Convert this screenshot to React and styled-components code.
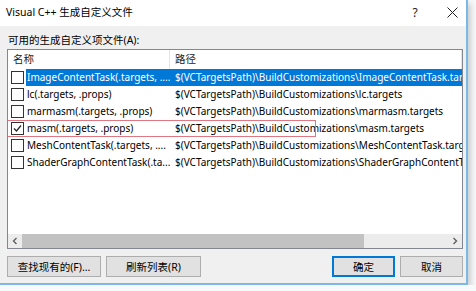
import React from 'react';
import styled, { createGlobalStyle } from 'styled-components';

const GlobalStyle = createGlobalStyle`
  html, body {
    margin: 0;
    padding: 0;
    background: #f7f9fb;
    overflow: hidden;
  }
  body {
    font-family: "Noto Sans", "Noto Sans CJK SC", sans-serif;
    font-size: 10px;
    color: #000;
  }
`;

const Frame = styled.div`
  width: 466px;
  height: 283px;
  background: #fff;
  border-right: 2px solid #7cb8e6;
  border-bottom: 2px solid #7cb8e6;
  box-shadow: 3px 3px 6px rgba(0, 0, 0, 0.18);
  display: flex;
  flex-direction: column;
`;

const TitleBar = styled.div`
  height: 26px;
  flex-shrink: 0;
  display: flex;
  align-items: center;
  padding-left: 6px;
  background: #fff;
`;

const Title = styled.div`
  flex: 1;
  font-size: 10.5px;
  line-height: 14px;
  margin-top: -3px;
`;

const TitleButton = styled.div`
  width: ${(p) => p.w}px;
  margin-right: ${(p) => p.mr || 0}px;
  display: flex;
  align-items: center;
  justify-content: center;
  font-size: 12px;
  color: #222;
  margin-top: -2px;
`;

const Body = styled.div`
  flex: 1;
  background: #f0f0f0;
  padding: 7px 3px 0 7px;
  display: flex;
  flex-direction: column;
`;

const Label = styled.div`
  height: 16px;
  flex-shrink: 0;
  font-size: 10.5px;
  line-height: 14px;
  padding-left: 1px;
`;

const ListBox = styled.div`
  height: 200px;
  flex-shrink: 0;
  box-sizing: border-box;
  border: 1px solid #828790;
  background: #fff;
  overflow: hidden;
`;

const Header = styled.div`
  height: 19px;
  display: flex;
`;

const HeadCell = styled.div`
  width: ${(p) => (p.w ? `${p.w}px` : 'auto')};
  flex: ${(p) => (p.w ? 'none' : 1)};
  box-sizing: border-box;
  padding-left: ${(p) => p.pad}px;
  font-size: 10.5px;
  line-height: 18px;
  color: #1a1a1a;
  border-right: 1px solid #e5e5e5;
`;

const Rows = styled.div`
  height: 165px;
`;

const Row = styled.div`
  position: relative;
  height: 17px;
  display: flex;
  align-items: stretch;
  white-space: nowrap;
`;

const CheckCell = styled.div`
  width: 18px;
  flex: none;
  display: flex;
  align-items: center;
  padding-left: 3px;
  box-sizing: border-box;
`;

const Box = styled.div`
  width: 11px;
  height: 11px;
  border: 1px solid #333;
  background: #fff;
  display: flex;
  align-items: center;
  justify-content: center;
`;

const Sel = styled.div`
  flex: 1;
  display: flex;
  overflow: hidden;
  background: ${(p) => (p.$on ? '#0078d7' : 'transparent')};
  color: ${(p) => (p.$on ? '#fff' : '#000')};
`;

const NameCell = styled.div`
  width: 144px;
  flex: none;
  padding-left: 1px;
  box-sizing: border-box;
  line-height: 17px;
  overflow: hidden;
`;

const PathCell = styled.div`
  flex: 1;
  padding-left: 5px;
  line-height: 17px;
  overflow: hidden;
`;

const Mark = styled.div`
  position: absolute;
  left: -1px;
  top: 0;
  width: 309px;
  height: 17px;
  box-sizing: border-box;
  border: 1px solid #e07682;
  pointer-events: none;
`;

const ScrollBar = styled.div`
  height: 14px;
  display: flex;
  align-items: center;
  background: #ececec;
`;

const Arrow = styled.div`
  width: 14px;
  height: 14px;
  flex: none;
  display: flex;
  align-items: center;
  justify-content: center;
`;

const Thumb = styled.div`
  width: 342px;
  height: 14px;
  flex: none;
  background: #c2c2c2;
`;

const Track = styled.div`
  flex: 1;
`;

const ButtonRow = styled.div`
  margin-top: 7px;
  display: flex;
  gap: 5px;
`;

const Button = styled.div`
  width: ${(p) => p.w}px;
  height: 21px;
  box-sizing: border-box;
  border: ${(p) => (p.$primary ? '2px solid #0078d7' : '1px solid #adadad')};
  background: #e1e1e1;
  display: flex;
  align-items: center;
  justify-content: center;
  font-size: 10.5px;
  line-height: 14px;
  margin-left: ${(p) => p.ml || 0}px;
`;

const Check = () => (
  <svg width="9" height="9" viewBox="0 0 9 9">
    <path d="M1 4.5 L3.5 7 L8 1.5" fill="none" stroke="#222" strokeWidth="1.2" />
  </svg>
);

const Chevron = ({ dir }) => (
  <svg width="6" height="8" viewBox="0 0 6 8">
    <path
      d={dir === 'left' ? 'M4.5 1 L1.5 4 L4.5 7' : 'M1.5 1 L4.5 4 L1.5 7'}
      fill="none"
      stroke="#606060"
      strokeWidth="1.4"
    />
  </svg>
);

const items = [
  { name: 'ImageContentTask(.targets, ....', path: '$(VCTargetsPath)\\BuildCustomizations\\ImageContentTask.targets', on: true },
  { name: 'lc(.targets, .props)', path: '$(VCTargetsPath)\\BuildCustomizations\\lc.targets' },
  { name: 'marmasm(.targets, .props)', path: '$(VCTargetsPath)\\BuildCustomizations\\marmasm.targets' },
  { name: 'masm(.targets, .props)', path: '$(VCTargetsPath)\\BuildCustomizations\\masm.targets', checked: true, mark: true },
  { name: 'MeshContentTask(.targets, ....', path: '$(VCTargetsPath)\\BuildCustomizations\\MeshContentTask.targets' },
  { name: 'ShaderGraphContentTask(.ta...', path: '$(VCTargetsPath)\\BuildCustomizations\\ShaderGraphContentTask.targets' },
];

const App = () => (
  <>
    <GlobalStyle />
    <Frame>
      <TitleBar>
        <Title>Visual C++ 生成自定义文件</Title>
        <TitleButton w={20} mr={13}>?</TitleButton>
        <TitleButton w={28}>
          <svg width="11" height="11" viewBox="0 0 11 11">
            <path d="M0.5 0.5 L10.5 10.5 M10.5 0.5 L0.5 10.5" stroke="#222" strokeWidth="1" />
          </svg>
        </TitleButton>
      </TitleBar>
      <Body>
        <Label>可用的生成自定义项文件(A):</Label>
        <ListBox>
          <Header>
            <HeadCell w={162} pad={5}>名称</HeadCell>
            <HeadCell pad={5}>路径</HeadCell>
          </Header>
          <Rows>
            {items.map((it) => (
              <Row key={it.name}>
                <CheckCell>
                  <Box>{it.checked && <Check />}</Box>
                </CheckCell>
                <Sel $on={it.on}>
                  <NameCell>{it.name}</NameCell>
                  <PathCell>{it.path}</PathCell>
                </Sel>
                {it.mark && <Mark />}
              </Row>
            ))}
          </Rows>
          <ScrollBar>
            <Arrow><Chevron dir="left" /></Arrow>
            <Thumb />
            <Track />
            <Arrow><Chevron dir="right" /></Arrow>
          </ScrollBar>
        </ListBox>
        <ButtonRow>
          <Button w={94}>查找现有的(F)...</Button>
          <Button w={95}>刷新列表(R)</Button>
          <Button w={63} $primary ml={126}>确定</Button>
          <Button w={63}>取消</Button>
        </ButtonRow>
      </Body>
    </Frame>
  </>
);

export default App;
